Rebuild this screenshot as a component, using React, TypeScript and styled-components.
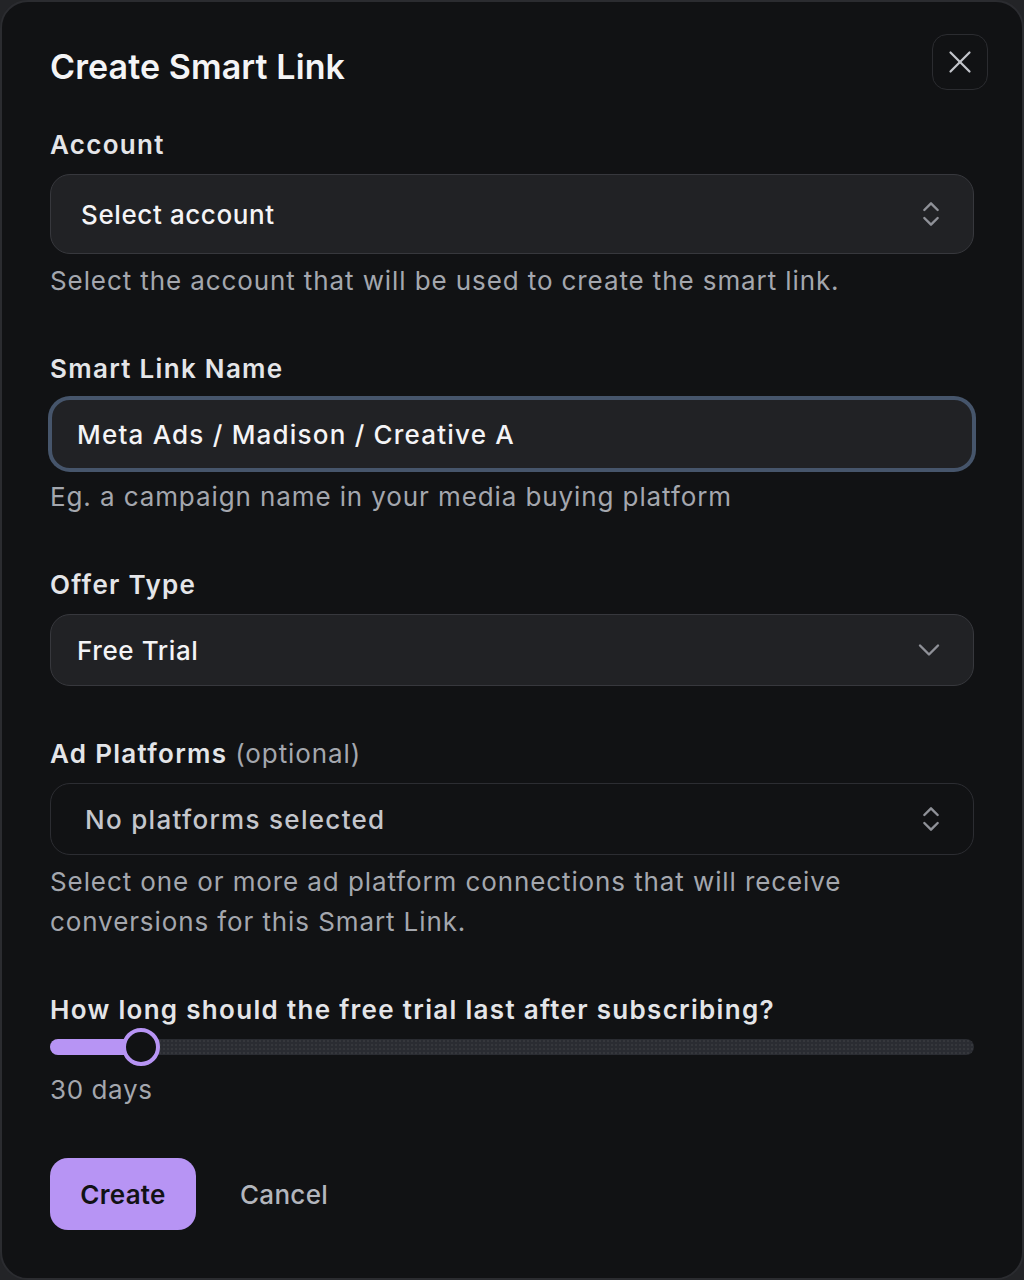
import React, { useState } from 'react';
import styled, { createGlobalStyle } from 'styled-components';
import { X, ChevronsUpDown, ChevronDown } from 'lucide-react';

const colors = {
  page: '#232427',
  dialog: '#111214',
  dialogBorder: '#2b2c30',
  title: '#f4f4f6',
  label: '#e4e5e8',
  helper: '#a4a7ae',
  field: '#212225',
  fieldBorder: '#37383d',
  ghostBorder: '#2c2d32',
  ring: '#46556b',
  icon: '#8f9198',
  accent: '#b794f4',
  track: '#2a2c32',
};

const GlobalStyle = createGlobalStyle`
  html, body {
    margin: 0;
    padding: 0;
    background: ${colors.page};
  }
  body {
    font-family: Inter, "Noto Sans", "Liberation Sans", sans-serif;
    -webkit-font-smoothing: antialiased;
  }
  * { box-sizing: border-box; }
`;

const Dialog = styled.div`
  width: 1024px;
  height: 1280px;
  background: ${colors.dialog};
  border: 2px solid ${colors.dialogBorder};
  border-radius: 28px;
  padding: 32px 48px 0 48px;
  display: flex;
  flex-direction: column;
`;

const Header = styled.div`
  display: flex;
  justify-content: space-between;
  align-items: flex-start;
  margin-right: -14px;
`;

const Title = styled.h1`
  margin: 13px 0 0;
  font-size: 34px;
  line-height: 40px;
  font-weight: 600;
  letter-spacing: 0.1px;
  color: ${colors.title};
`;

const CloseButton = styled.button`
  width: 56px;
  height: 56px;
  border-radius: 15px;
  border: 1.5px solid ${colors.dialogBorder};
  background: transparent;
  color: #c3c5cb;
  display: flex;
  align-items: center;
  justify-content: center;
  padding: 0;
  cursor: pointer;
`;

const Form = styled.div`
  display: flex;
  flex-direction: column;
  gap: 50px;
  margin-top: 37px;
`;

const Field = styled.div`
  display: flex;
  flex-direction: column;
`;

const Label = styled.label`
  font-size: 26px;
  line-height: 36px;
  font-weight: 600;
  letter-spacing: 1.3px;
  color: ${colors.label};
  margin-bottom: 11px;
`;

const Optional = styled.span`
  font-weight: 400;
  letter-spacing: 0.9px;
  color: ${colors.helper};
`;

const Helper = styled.p`
  margin: 7px 0 0;
  font-size: 26px;
  line-height: 40px;
  font-weight: 400;
  letter-spacing: 0.9px;
  color: ${colors.helper};
  max-width: 820px;
`;

const SelectBox = styled.div<{ $height: number; $ghost?: boolean; $inset: number }>`
  height: ${({ $height }) => $height}px;
  display: flex;
  align-items: center;
  justify-content: space-between;
  padding: 0 26px 0 ${({ $inset }) => $inset}px;
  border-radius: 20px;
  background: ${({ $ghost }) => ($ghost ? 'transparent' : colors.field)};
  border: 1.5px solid ${({ $ghost }) => ($ghost ? colors.ghostBorder : colors.fieldBorder)};
  font-size: 26px;
  font-weight: 500;
  letter-spacing: ${({ $ghost }) => ($ghost ? 1.3 : 0.6)}px;
  color: ${({ $ghost }) => ($ghost ? '#c4c6cc' : '#f4f4f6')};
  cursor: pointer;
`;

const TextInput = styled.input`
  height: 72px;
  width: 100%;
  padding: 0 25px;
  border-radius: 20px;
  background: ${colors.field};
  border: 2px solid ${colors.ring};
  box-shadow: 0 0 0 2px ${colors.ring};
  font-family: inherit;
  font-size: 26px;
  font-weight: 500;
  letter-spacing: 1.2px;
  color: #f4f4f6;
  outline: none;
`;

const SliderLabel = styled(Label)`
  margin-bottom: 0;
`;

const SliderRoot = styled.div`
  position: relative;
  height: 38px;
  display: flex;
  align-items: center;
`;

const Track = styled.div`
  position: relative;
  width: 100%;
  height: 16px;
  border-radius: 8px;
  background-color: ${colors.track};
  background-image: radial-gradient(rgba(255, 255, 255, 0.05) 1px, transparent 1px);
  background-size: 4px 4px;
  overflow: hidden;
`;

const Range = styled.div`
  position: absolute;
  left: 0;
  top: 0;
  bottom: 0;
  background: ${colors.accent};
`;

const Thumb = styled.div`
  position: absolute;
  top: 0;
  width: 38px;
  height: 38px;
  border-radius: 50%;
  border: 4px solid ${colors.accent};
  background: ${colors.dialog};
  transform: translateX(-50%);
`;

const SliderValue = styled.div`
  margin-top: 4px;
  font-size: 26px;
  line-height: 40px;
  letter-spacing: 0.6px;
  color: ${colors.helper};
`;

const Actions = styled.div`
  display: flex;
  align-items: center;
  gap: 44px;
  margin-top: -2px;
`;

const PrimaryButton = styled.button`
  height: 72px;
  width: 146px;
  border: none;
  border-radius: 18px;
  background: ${colors.accent};
  color: #121214;
  font-family: inherit;
  font-size: 26px;
  font-weight: 600;
  letter-spacing: 0.3px;
  cursor: pointer;
`;

const TextButton = styled.button`
  border: none;
  background: transparent;
  padding: 0;
  color: #b3b6bd;
  font-family: inherit;
  font-size: 26px;
  font-weight: 500;
  letter-spacing: 0.3px;
  cursor: pointer;
`;

const App = () => {
  const [name, setName] = useState('Meta Ads / Madison / Creative A');
  const days = 30;
  const pct = 9.9;

  return (
    <>
      <GlobalStyle />
      <Dialog>
        <Header>
          <Title>Create Smart Link</Title>
          <CloseButton aria-label="Close">
            <X size={38} strokeWidth={1.4} />
          </CloseButton>
        </Header>

        <Form>
          <Field>
            <Label>Account</Label>
            <SelectBox $height={80} $inset={30}>
              <span>Select account</span>
              <ChevronsUpDown size={32} color={colors.icon} strokeWidth={1.8} />
            </SelectBox>
            <Helper>Select the account that will be used to create the smart link.</Helper>
          </Field>

          <Field>
            <Label>Smart Link Name</Label>
            <TextInput value={name} onChange={(e) => setName(e.target.value)} />
            <Helper>Eg. a campaign name in your media buying platform</Helper>
          </Field>

          <Field>
            <Label>Offer Type</Label>
            <SelectBox $height={72} $inset={26}>
              <span>Free Trial</span>
              <ChevronDown size={36} color={colors.icon} strokeWidth={1.6} />
            </SelectBox>
          </Field>

          <Field>
            <Label>
              Ad Platforms <Optional>(optional)</Optional>
            </Label>
            <SelectBox $height={72} $inset={34} $ghost>
              <span>No platforms selected</span>
              <ChevronsUpDown size={32} color={colors.icon} strokeWidth={1.8} />
            </SelectBox>
            <Helper>
              Select one or more ad platform connections that will receive conversions for this Smart Link.
            </Helper>
          </Field>

          <Field>
            <SliderLabel>How long should the free trial last after subscribing?</SliderLabel>
            <SliderRoot>
              <Track>
                <Range style={{ width: `${pct}%` }} />
              </Track>
              <Thumb style={{ left: `${pct}%` }} />
            </SliderRoot>
            <SliderValue>{days} days</SliderValue>
          </Field>

          <Actions>
            <PrimaryButton>Create</PrimaryButton>
            <TextButton>Cancel</TextButton>
          </Actions>
        </Form>
      </Dialog>
    </>
  );
};

export default App;
